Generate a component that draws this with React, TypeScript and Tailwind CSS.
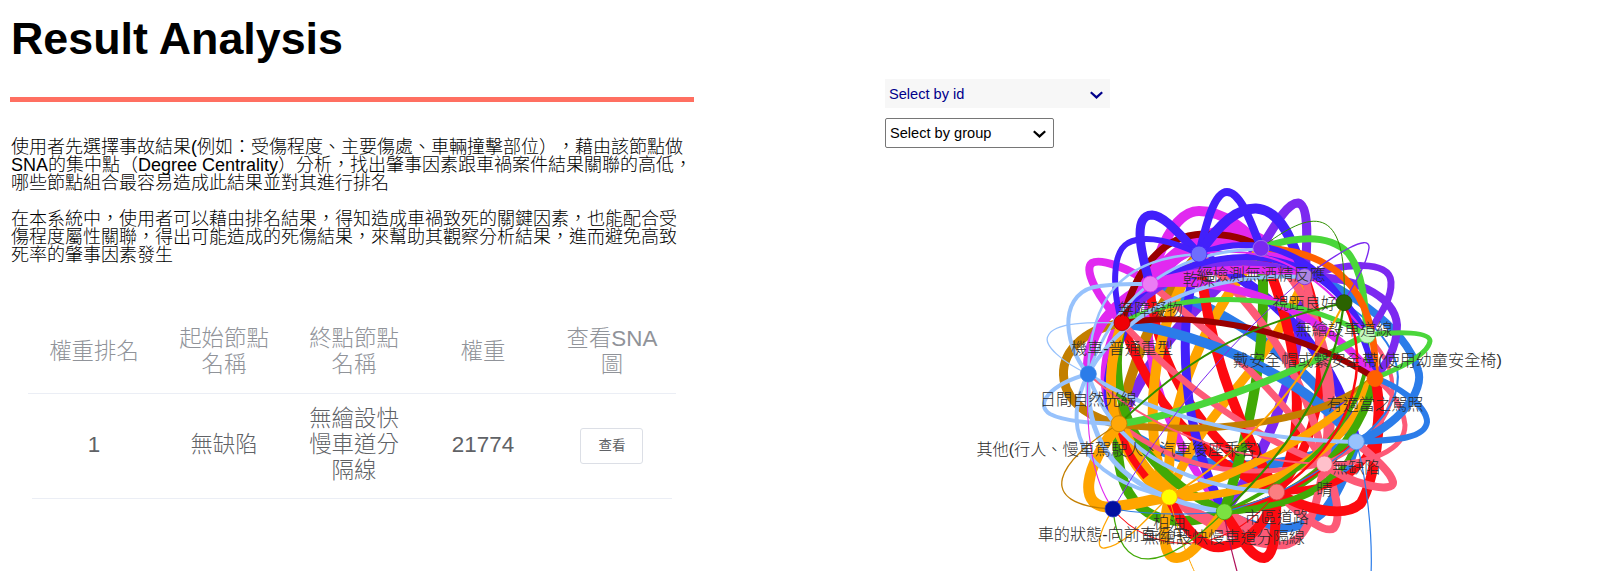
import React from "react";

type Edge = [color: string, width: number, d: string];
type GraphNode = { x: number; y: number; fill: string; stroke: string; label: string; ly: number };

const INDIGO = "#4220fb";
const MAGENTA = "#e129f0";
const VIOLET = "#7c29f0";
const MAROON = "#990000";
const LIME = "#4ad63a";
const GREEN = "#41a906";
const ORANGE = "#ffa500";
const EMBER = "#ff6000";
const RED = "#fd0a10";
const PINK = "#fd5a77";
const BLUE = "#2b7ce9";
const SKY = "#97c2fc";
const BROWN = "#c37f00";

const edges: Edge[] = [
  // chords through the middle
  [VIOLET, 11, "M1261,248 C1200,300 1150,350 1119,424"],
  [VIOLET, 10, "M1305,277 C1300,370 1270,450 1224,512"],
  [MAGENTA, 8, "M1150,284 C1140,370 1170,440 1224,512"],
  [MAGENTA, 9, "M1150,284 C1100,330 1095,390 1119,424"],
  [BLUE, 10, "M1150,284 C1230,310 1320,370 1356,442"],
  [BLUE, 10, "M1119,424 C1170,470 1260,480 1356,442"],
  [BLUE, 9, "M1224,512 C1270,540 1310,527 1325,510 C1340,490 1350,465 1356,442"],
  [BROWN, 10, "M1199,254 C1150,310 1130,370 1119,424"],
  [BROWN, 9, "M1122,323 C1080,330 1060,355 1064,380 C1068,405 1095,420 1119,424"],
  [RED, 9, "M1150,284 C1155,370 1205,440 1277,492"],
  [RED, 9, "M1122,323 C1150,400 1200,460 1277,492"],
  [ORANGE, 9, "M1305,277 C1265,380 1205,400 1169,497"],
  [ORANGE, 10, "M1261,248 C1190,340 1165,420 1169,497"],
  [ORANGE, 10, "M1199,254 C1150,330 1140,430 1169,497"],
  [INDIGO, 10, "M1150,284 C1105,350 1100,400 1119,424"],
  [INDIGO, 10, "M1199,254 C1290,300 1340,370 1356,442"],
  [INDIGO, 9, "M1199,254 C1175,330 1182,430 1224,512"],
  [GREEN, 10, "M1261,248 C1270,340 1250,430 1224,512"],
  [GREEN, 9, "M1122,323 C1105,400 1135,470 1224,512"],
  [GREEN, 10, "M1119,424 C1110,500 1150,540 1224,512"],
  [RED, 10, "M1199,254 C1208,350 1240,430 1277,492"],
  [RED, 10, "M1261,248 C1300,340 1310,430 1277,492"],
  [RED, 9, "M1305,277 C1335,360 1320,440 1277,492"],
  [PINK, 8, "M1199,254 C1260,310 1310,380 1324,464"],
  [PINK, 8, "M1261,248 C1320,290 1345,390 1324,464"],
  [PINK, 8, "M1305,277 C1320,340 1335,400 1324,464"],
  [PINK, 7, "M1150,284 C1220,340 1290,400 1324,464"],
  [BLUE, 10, "M1122,323 C1210,335 1310,380 1356,442"],
  [PINK, 6.5, "M1122,323 C1180,385 1250,435 1324,464"],
  [PINK, 5, "M1119,424 C1180,470 1240,480 1324,464"],
  [ORANGE, 10, "M1122,323 C1095,400 1120,460 1169,497"],
  [ORANGE, 16, "M1119,424 C1130,455 1145,475 1169,497"],
  [RED, 7, "M1119,424 C1126,452 1134,462 1146,477"],
  [ORANGE, 11, "M1119,424 C1085,465 1075,510 1113,507 C1130,505 1150,500 1169,497"],
  [BROWN, 7, "M1119,424 C1200,435 1320,425 1375,378"],
  [ORANGE, 8, "M1169,497 C1250,470 1330,430 1375,378"],
  [ORANGE, 8, "M1169,497 C1240,500 1340,470 1375,378"],
  [GREEN, 8, "M1224,512 C1310,500 1360,440 1375,378"],
  [GREEN, 5, "M1224,512 C1290,510 1340,490 1356,442"],
  [GREEN, 4, "M1367,335 C1372,390 1340,460 1224,512"],
  // loops along the bottom
  [PINK, 10, "M1169,497 C1210,525 1250,535 1277,542"],
  [PINK, 8, "M1169,497 C1220,535 1260,547 1285,545 C1310,540 1318,500 1324,464"],
  [PINK, 12, "M1224,512 C1240,525 1262,530 1277,541"],
  [PINK, 8, "M1277,492 C1300,515 1325,535 1334,528 C1342,518 1335,485 1324,464"],
  [ORANGE, 10, "M1169,497 C1160,540 1165,558 1177,558 C1192,558 1205,535 1224,512"],
  [RED, 10, "M1169,497 C1190,545 1215,550 1225,546 C1250,544 1268,520 1277,492"],
  [RED, 10, "M1224,512 C1240,535 1250,558 1264,558 C1277,556 1275,520 1277,492"],
  [RED, 10, "M1277,492 C1300,508 1345,520 1361,503 C1374,480 1385,420 1375,378"],
  [RED, 7, "M1277,492 C1330,490 1390,480 1375,378"],
  [RED, 4, "M1224,512 C1280,500 1310,480 1356,442"],
  [GREEN, 6, "M1224,512 C1270,508 1310,500 1336,472"],
  [PINK, 8, "M1324,464 C1350,485 1395,494 1393,482 C1390,470 1370,455 1356,442"],
  [PINK, 5, "M1324,464 C1370,465 1405,450 1405,425 C1403,405 1390,390 1375,378"],
  [PINK, 4, "M1367,335 C1410,380 1400,430 1324,464"],
  [BLUE, 6, "M1356,442 C1390,440 1425,440 1427,422 C1427,405 1395,385 1375,378"],
  [BLUE, 8, "M1356,442 C1400,425 1425,390 1418,370 C1405,325 1350,290 1261,248"],
  [BLUE, 2, "M1344,303 C1400,340 1425,390 1356,442"],
  [BLUE, 1.2, "M1356,442 C1365,470 1373,530 1371,575"],
  // loops along the top
  [MAGENTA, 10, "M1150,284 C1163,235 1180,211 1199,211 C1225,211 1248,232 1261,248"],
  [MAGENTA, 15, "M1150,284 C1175,248 1215,228 1240,233 C1265,240 1290,262 1305,277"],
  [MAGENTA, 8, "M1150,284 C1180,245 1225,238 1261,248"],
  [MAGENTA, 8, "M1150,284 C1130,268 1100,258 1092,263 C1083,270 1098,298 1122,323"],
  [MAGENTA, 10, "M1088,374 C1086,340 1105,305 1150,284"],
  [VIOLET, 9, "M1261,248 C1278,220 1288,203 1298,203 C1310,205 1307,245 1305,277"],
  [VIOLET, 6, "M1122,323 C1160,270 1240,245 1305,277"],
  [VIOLET, 7, "M1305,277 C1345,262 1390,260 1391,282 C1392,300 1378,318 1367,335"],
  [VIOLET, 8, "M1305,277 C1350,275 1395,295 1397,325 C1397,350 1385,365 1375,378"],
  [MAROON, 7, "M1122,323 C1130,290 1150,236 1203,234 C1230,234 1250,240 1261,248"],
  [INDIGO, 9, "M1150,284 C1140,250 1133,215 1152,215 C1166,216 1182,238 1199,254"],
  [INDIGO, 8, "M1199,254 C1206,225 1214,192 1227,192 C1241,192 1252,225 1261,248"],
  [INDIGO, 10, "M1199,254 C1220,222 1238,208 1256,208.5 C1282,210 1293,243 1305,277"],
  [INDIGO, 6, "M1122,323 C1112,290 1112,252 1128,243 C1146,234 1175,242 1199,254"],
  [LIME, 7, "M1261,248 C1300,235 1330,235 1348,253 C1362,270 1365,300 1367,335"],
  [EMBER, 7, "M1261,248 C1330,250 1378,285 1375,378"],
  [INDIGO, 6, "M1199,254 C1270,225 1350,265 1375,378"],
  [INDIGO, 6, "M1150,284 C1230,240 1320,245 1367,335"],
  [MAGENTA, 8, "M1150,284 C1200,268 1260,265 1305,277"],
  [MAGENTA, 8, "M1150,284 C1250,275 1330,320 1375,378"],
  [MAGENTA, 2, "M1199,254 C1260,245 1310,260 1367,335"],
  [LIME, 5, "M1122,323 C1180,290 1290,290 1367,335"],
  [LIME, 7, "M1119,424 C1200,412 1300,370 1367,335"],
  [LIME, 5, "M1367,335 C1400,331 1430,332 1430,341 C1428,356 1395,370 1375,378"],
  [MAROON, 6, "M1122,323 C1190,312 1290,325 1375,378"],
  [SKY, 4, "M1088,374 C1060,340 1060,290 1100,286 C1120,283 1135,284 1150,284"],
  [SKY, 1.3, "M1088,374 C1062,362 1043,345 1048,336 C1054,322 1090,322 1122,323"],
  [SKY, 2.5, "M1088,374 C1090,300 1120,258 1199,254"],
  [SKY, 3, "M1088,374 C1110,310 1160,250 1261,249"],
  [SKY, 4, "M1088,374 C1130,300 1220,272 1305,277"],
  // edges leaving the blue node
  [SKY, 4, "M1088,374 C1048,385 1035,405 1050,414 C1065,422 1095,423 1119,424"],
  [SKY, 4, "M1088,374 C1065,420 1070,475 1169,497"],
  [SKY, 5, "M1088,374 C1085,440 1115,495 1224,512"],
  [SKY, 4, "M1088,374 C1110,440 1170,488 1277,492"],
  [SKY, 4, "M1088,374 C1150,415 1250,440 1356,442"],
  [PINK, 2, "M1088,374 C1150,430 1230,460 1324,464"],
  // hairlines
  [RED, 2.5, "M1344,303 C1375,370 1350,440 1277,492"],
  ["#2f8f00", 1.8, "M1344,303 C1240,325 1180,365 1119,424"],
  ["#2f8f00", 2.2, "M1344,303 C1335,380 1290,450 1224,512"],
  [ORANGE, 2, "M1344,303 C1300,390 1240,455 1169,497"],
  ["#2f8f00", 1, "M1261,248 C1310,210 1348,200 1344,303"],
  [VIOLET, 1.4, "M1305,277 C1335,255 1370,232 1369,248 C1366,268 1352,285 1344,303"],
  [VIOLET, 1, "M1113,509 Q1191,373 1305,277"],
  [MAGENTA, 1.1, "M1088,374 C1085,430 1092,480 1113,509"],
  [BROWN, 1.3, "M1119,424 C1057,460 1032,505 1113,509"],
  [ORANGE, 1.3, "M1113,509 C1097,535 1096,550 1105,548 C1125,545 1145,520 1169,497"],
  [GREEN, 1.3, "M1113,509 C1120,580 1165,570 1224,512"],
  [RED, 1.1, "M1113,509 C1150,555 1225,560 1277,492"],
  [BLUE, 1.2, "M1113,509 C1150,515 1190,515 1224,512 C1270,500 1320,475 1356,442"],
  [ORANGE, 1, "M1169,497 C1180,540 1190,562 1196,575"],
  ["#b0105a", 1.2, "M1224,512 C1228,540 1234,560 1238,575"],
];

const nodes: GraphNode[] = [
  { x: 1199, y: 254, fill: "#6e6efd", stroke: "#4220fb", label: "乾燥", ly: 279 },
  { x: 1304.7, y: 276.7, fill: "#ad85e4", stroke: "#7c29f0", label: "視距良好", ly: 302.5 },
  { x: 1261, y: 248.3, fill: "#7b29f0", stroke: "#a87be6", label: "經檢測無酒精反應", ly: 274 },
  { x: 1150.3, y: 284, fill: "#eb7df4", stroke: "#e129f0", label: "無障礙物", ly: 309 },
  { x: 1367.3, y: 335, fill: "#c2fabc", stroke: "#74d66a", label: "戴安全帽或繫安全帶(使用幼童安全椅)", ly: 360 },
  { x: 1344, y: 302.7, fill: "#2b6300", stroke: "#1f5200", label: "無繪設車道線", ly: 328.5 },
  { x: 1122, y: 322.7, fill: "#f00005", stroke: "#a00000", label: "機車-普通重型", ly: 348 },
  { x: 1375, y: 378.5, fill: "#ff6000", stroke: "#ff6000", label: "有適當之駕照", ly: 404 },
  { x: 1088.3, y: 374, fill: "#2b7ce9", stroke: "#3a86ea", label: "日間自然光線", ly: 399 },
  { x: 1119, y: 423.7, fill: "#ffa807", stroke: "#c37f00", label: "其他(行人、慢車駕駛人、汽車後座乘客)", ly: 449 },
  { x: 1169.3, y: 497, fill: "#ffff00", stroke: "#ffa500", label: "柏油", ly: 522 },
  { x: 1113, y: 509, fill: "#000fa0", stroke: "#2b40c9", label: "車的狀態-向前直行中", ly: 534 },
  { x: 1224.3, y: 511.7, fill: "#7be141", stroke: "#41a906", label: "無繪設快慢車道分隔線", ly: 537 },
  { x: 1276.7, y: 492, fill: "#fb7e81", stroke: "#e03a40", label: "市區道路", ly: 517 },
  { x: 1324.3, y: 464, fill: "#ffc0cb", stroke: "#fd5a77", label: "晴", ly: 489 },
  { x: 1356.3, y: 441.7, fill: "#97c2fc", stroke: "#4f90ea", label: "無缺陷", ly: 467 },
];

function Network() {
  return (
    <svg className="block h-[411px] w-[639px] font-light" viewBox="960 160 639 411">
      <g fill="none" strokeLinecap="butt">
        {edges.map(([color, width, d], i) => (
          <path key={i} d={d} stroke={color} strokeWidth={width} />
        ))}
      </g>
      {nodes.map((n) => (
        <circle key={n.label} cx={n.x} cy={n.y} r={8} fill={n.fill} stroke={n.stroke} strokeWidth={0.8} />
      ))}
      <g fill="#2b2b2b" fontSize={16.15} textAnchor="middle">
        {nodes.map((n) => (
          <text key={n.label} x={n.x} y={n.ly + 6}>
            {n.label}
          </text>
        ))}
      </g>
    </svg>
  );
}

function Chevron() {
  return (
    <svg className="h-2 w-[13px]" viewBox="0 0 13 8" fill="none" stroke="currentColor" strokeWidth="2.2">
      <path d="M0.8 1.2 L6.5 6.4 L12.2 1.2" />
    </svg>
  );
}

const headers = [["權重排名"], ["起始節點", "名稱"], ["終點節點", "名稱"], ["權重"], ["查看SNA", "圖"]];
const row = [["1"], ["無缺陷"], ["無繪設快", "慢車道分", "隔線"], ["21774"]];

function Lines({ lines }: { lines: string[] }) {
  return (
    <div className="flex flex-col items-center whitespace-nowrap">
      {lines.map((l) => (
        <span key={l}>{l}</span>
      ))}
    </div>
  );
}

export default function App() {
  return (
    <main className="flex h-[571px] w-[1599px] overflow-hidden bg-white font-['Liberation_Sans','Noto_Sans_CJK_TC',sans-serif] text-black [text-spacing-trim:space-all]">
      <section className="w-[885px] shrink-0 pl-[10px]">
        <h1 className="h-[97px] pl-px pt-[12px] text-[44.8px] leading-[52px] font-bold">Result Analysis</h1>
        <div className="h-[5px] w-[684px] bg-[#ff6f61]" />
        <div className="mt-[36px] flex flex-col gap-[18px] pl-px text-[18px] leading-[18px] font-light whitespace-nowrap">
          <p>
            使用者先選擇事故結果(例如：受傷程度、主要傷處、車輛撞擊部位），藉由該節點做
            <br />
            SNA的集中點（Degree Centrality）分析，找出肇事因素跟車禍案件結果關聯的高低，
            <br />
            哪些節點組合最容易造成此結果並對其進行排名
          </p>
          <p>
            在本系統中，使用者可以藉由排名結果，得知造成車禍致死的關鍵因素，也能配合受
            <br />
            傷程度屬性關聯，得出可能造成的死傷結果，來幫助其觀察分析結果，進而避免高致
            <br />
            死率的肇事因素發生
          </p>
        </div>
        <div className="mt-[45px] ml-[18px] w-[648px] text-[22.4px] leading-[26px] font-light">
          <div className="grid h-[85px] grid-cols-[130px_130px_130px_128px_130px] items-center border-b border-[#ebeef5] pt-[2px] pl-px text-[#909399]">
            {headers.map((h) => (
              <Lines key={h[0]} lines={h} />
            ))}
          </div>
          <div className="mx-1 h-[105px] border-b border-[#ebeef5] text-[#606266]">
            <div className="-mx-1 grid h-full grid-cols-[130px_130px_130px_128px_130px] items-center pb-[2px] pl-px">
              {row.map((c) => (
                <Lines key={c[0]} lines={c} />
              ))}
              <div className="flex justify-center pt-[2px] pr-px">
                <button className="h-9 w-[63px] rounded-[3px] border border-[#dcdfe6] bg-white pl-px text-[13.5px] leading-none font-normal">
                  查看
                </button>
              </div>
            </div>
          </div>
        </div>
      </section>
      <section className="flex w-[714px] flex-col pt-[79px]">
        <button className="flex h-[29px] w-[225px] items-center justify-between bg-[#f7f7f7] pt-[2px] pr-[7px] pl-[4px] text-[14.6px] text-[#00008b]">
          Select by id
          <Chevron />
        </button>
        <button className="mt-[10px] flex h-[30px] w-[169px] items-center justify-between rounded-[2px] border border-[#767676] pt-[2px] pr-[7px] pl-[4px] text-[14.6px]">
          Select by group
          <Chevron />
        </button>
        <div className="mt-[12px] self-end">
          <Network />
        </div>
      </section>
    </main>
  );
}
